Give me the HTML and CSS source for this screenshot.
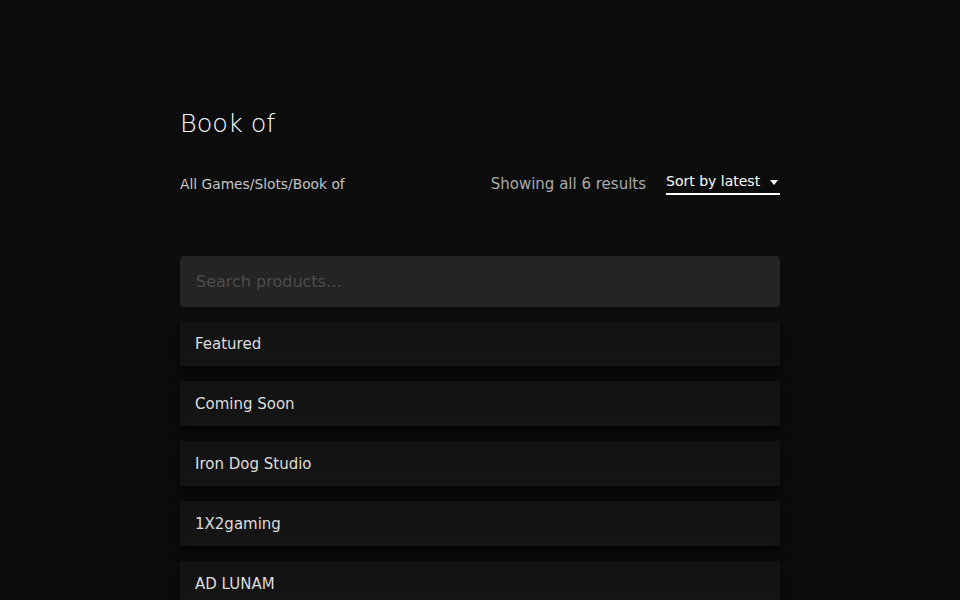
FILE: index.html
```html
<!DOCTYPE html>
<html lang="en">
<head>
    <meta charset="UTF-8">
    <title>Book of</title>
    <link rel="stylesheet" href="styles.css">
</head>
<body>
    <div class="shop">
        <!-- Title -->
        <h1 class="shop-title">Book of</h1>

        <!-- Breadcrumb + ordering -->
        <div class="shop-bar">
            <nav class="breadcrumb">All Games/Slots/Book of</nav>
            <div class="shop-tools">
                <span class="result-count">Showing all 6 results</span>
                <div class="ordering">
                    <span>Sort by latest</span>
                    <svg class="caret" width="8" height="5" viewBox="0 0 8 5"><path d="M0 0h8L4 5z" fill="#fff"/></svg>
                </div>
            </div>
        </div>

        <!-- Search -->
        <input type="text" class="search" placeholder="Search products…">

        <!-- Categories -->
        <ul class="categories">
            <li class="category">Featured</li>
            <li class="category">Coming Soon</li>
            <li class="category">Iron Dog Studio</li>
            <li class="category">1X2gaming</li>
            <li class="category">AD LUNAM</li>
            <li class="category">Amatic</li>
        </ul>
    </div>
</body>
</html>
```

FILE: styles.css
```css
/* Reset */
body, html {
    margin: 0;
    padding: 0;
}

body {
    background: #0c0c0c;
    color: #ddd;
    font-family: "DejaVu Sans", sans-serif;
}

/* Main column */
.shop {
    width: 600px;
    margin: 0 auto;
    padding-top: 106px;
}

/* Title */
.shop-title {
    margin: 0;
    font-size: 25.5px;
    font-weight: 200;
    line-height: 34px;
    color: #fff;
}

/* Breadcrumb bar */
.shop-bar {
    display: flex;
    justify-content: space-between;
    align-items: center;
    margin-top: 31px;
}

.breadcrumb {
    font-size: 13.8px;
    color: #c4c4c4;
    margin-top: 1px;
}

.shop-tools {
    display: flex;
    align-items: center;
    gap: 20px;
}

.result-count {
    font-size: 15px;
    color: #aaa;
    margin-top: 1px;
}

.ordering {
    display: flex;
    align-items: center;
    justify-content: space-between;
    white-space: nowrap;
    box-sizing: border-box;
    width: 114px;
    font-size: 14px;
    color: #fff;
    padding: 2px 2px 4px 0;
    border-bottom: 2px solid #fff;
}

.caret {
    margin-top: 2px;
}

/* Search */
.search {
    display: block;
    box-sizing: border-box;
    width: 100%;
    height: 51px;
    margin-top: 61px;
    padding: 0 16px;
    border: none;
    border-radius: 4px;
    background: #242424;
    color: #ddd;
    font-family: "DejaVu Sans", sans-serif;
    font-size: 16px;
    outline: none;
}

.search::placeholder {
    color: #4d4d4d;
}

/* Category list */
.categories {
    list-style: none;
    margin: 14px 0 0;
    padding: 0;
    display: flex;
    flex-direction: column;
    gap: 14px;
}

.category {
    height: 45px;
    line-height: 46px;
    padding: 0 15px;
    font-size: 15px;
    color: #ddd;
    background: linear-gradient(#121212, #151515);
    border-bottom: 1px solid #060606;
    box-shadow: 0 4px 10px rgba(0, 0, 0, 0.6);
}
```
